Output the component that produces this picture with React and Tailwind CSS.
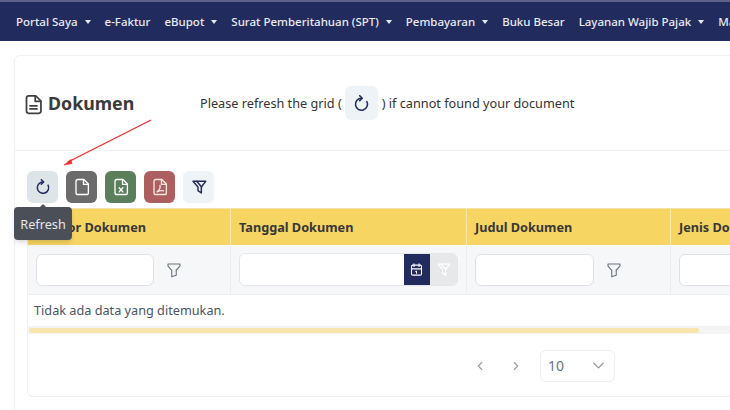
import React from 'react';
import {
  TbFilter,
  TbCalendar,
  TbChevronLeft,
  TbChevronRight,
  TbChevronDown,
} from 'react-icons/tb';

const menu = [
  { label: 'Portal Saya', caret: true },
  { label: 'e-Faktur' },
  { label: 'eBupot', caret: true },
  { label: 'Surat Pemberitahuan (SPT)', caret: true },
  { label: 'Pembayaran', caret: true },
  { label: 'Buku Besar' },
  { label: 'Layanan Wajib Pajak', caret: true },
  { label: 'Manajemen' },
];

function NavItem({ label, caret }) {
  return (
    <div className="flex items-center shrink-0 whitespace-nowrap">
      <span>{label}</span>
      {caret && <span className="ml-[7px] w-0 h-0 border-x-[3px] border-x-transparent border-t-[4px] border-t-[#e8eaf2]" />}
    </div>
  );
}

function RefreshIcon({ size, className }) {
  return (
    <svg width={size} height={size} viewBox="0 0 24 24" fill="none" stroke="currentColor" strokeWidth="2.2" strokeLinecap="round" strokeLinejoin="round" className={className}>
      <path d="M12 4.500a8.500 8.500 0 1 0 7.600 4.700" />
      <path d="M9.500 1 13 4.500 9.500 8" />
    </svg>
  );
}

function FilterOffIcon({ size, className, strokeWidth = 2.2 }) {
  return (
    <svg width={size} height={size} viewBox="0 0 24 24" fill="none" stroke="currentColor" strokeWidth={strokeWidth} strokeLinejoin="round" strokeLinecap="round" className={className}>
      <path d="M3 3.500h19l-6.500 8.500v9l-5-3.500v-5.500L3 3.500Z" />
      <path d="M8.500 3.500l7.500 8.500" />
    </svg>
  );
}

function DocIcon({ size, className, children, strokeWidth = 1.8 }) {
  return (
    <svg width={size} height={size} viewBox="0 0 24 24" fill="none" stroke="currentColor" strokeWidth={strokeWidth} strokeLinejoin="round" strokeLinecap="round" className={className}>
      <path d="M6.500 2h8l6 6v11.500a2.500 2.500 0 0 1-2.500 2.500H6.500A2.500 2.500 0 0 1 4 19.500V4.500A2.500 2.500 0 0 1 6.500 2Z" />
      <path d="M14 2v6.500h6.500" />
      {children}
    </svg>
  );
}

function ToolButton({ className, children }) {
  return (
    <div className={`w-[31px] h-[32px] rounded-md flex items-center justify-center ${className}`}>
      {children}
    </div>
  );
}

function FilterInput({ width }) {
  return <div className={`h-[32px] bg-white border border-[#dfe1e6] rounded-md ${width}`} />;
}

function FilterIcon() {
  return <TbFilter size={18} strokeWidth={1.5} className="text-[#6b7280] ml-[11px]" />;
}

export default function App() {
  return (
    <div
      className="relative w-[730px] h-[410px] overflow-hidden bg-white text-[#374151]"
      style={{ fontFamily: '"Noto Sans", sans-serif' }}
    >
      <nav className="h-[41px] bg-[#222b5e] border-t-2 border-[#5b6189] flex items-center gap-[14px] pl-[16px] text-[11.500px] font-medium text-[#e8eaf2]">
        <NavItem {...menu[0]} />
        <NavItem {...menu[1]} />
        <NavItem {...menu[2]} />
        <NavItem {...menu[3]} />
        <NavItem {...menu[4]} />
        <NavItem {...menu[5]} />
        <NavItem {...menu[6]} />
        <NavItem {...menu[7]} />
      </nav>

      <div className="ml-[14px] mt-[14px] w-[800px] h-[400px] border border-[#eff0f2] rounded-md">
        <div className="h-[95px] border-b border-[#f1f2f4] flex items-center pl-[8px] pt-[2px]">
          <DocIcon size={21} strokeWidth={2} className="text-[#3f3f46]">
            <path d="M8 13.500h8M8 17h8" />
          </DocIcon>
          <span className="ml-[4px] w-[152px] text-[17.800px] leading-none font-bold text-[#3a3a3a]">Dokumen</span>
          <span className="text-[12.700px] text-[#333]">Please refresh the grid (</span>
          <div className="ml-[3px] mr-[4px] -mt-[2px] w-[33px] h-[34px] rounded-md bg-[#edf3f6] flex items-center justify-center">
            <RefreshIcon size={17} className="text-[#222b5e]" />
          </div>
          <span className="text-[12.700px] text-[#333]">) if cannot found your document</span>
        </div>

        <div className="pl-[12px] pt-[20px]">
          <div className="flex gap-[8px] h-[37px]">
            <ToolButton className="bg-[#dde5e9]">
              <RefreshIcon size={16} className="text-[#222b5e]" />
            </ToolButton>
            <ToolButton className="bg-[#6b6b6b]">
              <DocIcon size={18} className="text-white" />
            </ToolButton>
            <ToolButton className="bg-[#5b7f5a]">
              <DocIcon size={18} className="text-white">
                <path d="M9.500 13l5 5.500M14.500 13l-5 5.500" />
              </DocIcon>
            </ToolButton>
            <ToolButton className="bg-[#ad5f5f]">
              <DocIcon size={18} className="text-[#f6e6e0]">
                <path d="M12 10c1 3-1 6-4 8.500 3-1.500 6-2 8.500-1.500" />
              </DocIcon>
            </ToolButton>
            <ToolButton className="bg-[#edf3f6]">
              <FilterOffIcon size={16} className="text-[#222b5e]" />
            </ToolButton>
          </div>

          <div className="w-[760px] h-[189px] border-b border-x border-[#eff0f2] rounded-b-md">
            <div className="grid grid-cols-[203px_236px_204px_115px] h-[37px] bg-[#f7d562] text-[12.700px] font-bold text-[#373737] border-t border-[#f3e3a6]">
              <div className="flex items-center pl-[9px] pt-[1px] border-r border-[#fbe9a8]">Nomor Dokumen</div>
              <div className="flex items-center pl-[8px] pt-[1px] border-r border-[#fbe9a8]">Tanggal Dokumen</div>
              <div className="flex items-center pl-[8px] pt-[1px] border-r border-[#fbe9a8]">Judul Dokumen</div>
              <div className="flex items-center pl-[8px] pt-[1px]">Jenis Dokumen</div>
            </div>

            <div className="grid grid-cols-[203px_236px_204px_115px] h-[50px] bg-[#f6f7f9] border-b border-[#eceef1]">
              <div className="flex items-center pl-[8px] border-r border-[#eceef1]">
                <FilterInput width="w-[118px]" />
                <FilterIcon />
              </div>
              <div className="flex items-center pl-[8px] border-r border-[#eceef1]">
                <div className="flex h-[33px] w-[219px] border border-[#e4e6ea] rounded-md overflow-hidden">
                  <div className="w-[165px] bg-white" />
                  <div className="w-[27px] bg-[#222b5e] flex items-center justify-center">
                    <TbCalendar size={15} strokeWidth={1.75} className="text-white" />
                  </div>
                  <div className="w-[27px] bg-[#e7e8e9] flex items-center justify-center">
                    <FilterOffIcon size={15} strokeWidth={2} className="text-white" />
                  </div>
                </div>
              </div>
              <div className="flex items-center pl-[8px] border-r border-[#eceef1]">
                <FilterInput width="w-[119px]" />
                <FilterIcon />
              </div>
              <div className="flex items-center pl-[8px]">
                <FilterInput width="w-[105px]" />
              </div>
            </div>

            <div className="h-[31px] pl-[6px] pt-[1px] flex items-center text-[12.700px] text-[#4b5563]">
              Tidak ada data yang ditemukan.
            </div>

            <div className="h-[8px] bg-[#f4f4f4] flex items-center">
              <div className="ml-[1px] w-[670px] h-[5px] bg-[#f8e6ac] rounded-full" />
            </div>

            <div className="flex items-center h-[47px] mt-[8px] pl-[445px] text-[#9aa0a8]">
              <TbChevronLeft size={14} strokeWidth={2} />
              <TbChevronRight size={14} strokeWidth={2} className="ml-[22px]" />
              <div className="ml-[17px] w-[75px] h-[32px] bg-white border border-[#eceef1] rounded-md flex items-center justify-between pl-[7px] pr-[6px] text-[14px] text-[#6b7280]">
                <span>10</span>
                <TbChevronDown size={19} strokeWidth={1.5} className="text-[#8b9098]" />
              </div>
            </div>
          </div>
        </div>
      </div>

      {/* tooltip over the table header */}
      <div className="absolute left-[14px] top-[207px] w-[58px] h-[33px] pt-[2px] bg-[#4b5058] rounded-sm shadow-md flex items-center justify-center text-[12.700px] text-[#e5e7eb]">
        <span className="absolute -top-[3px] left-[25px] w-0 h-0 border-x-[4px] border-x-transparent border-b-[4px] border-b-[#4b5058]" />
        Refresh
      </div>

      {/* red annotation arrow */}
      <svg className="absolute left-0 top-0" width="730" height="410" fill="none">
        <line x1="151" y1="120" x2="68" y2="162" stroke="#ee2a2a" strokeWidth="1.3" />
        <path d="M64 165 L71 159.500 L72 163.500 Z" fill="#ee2a2a" stroke="#ee2a2a" strokeWidth="0.6" />
      </svg>
    </div>
  );
}
